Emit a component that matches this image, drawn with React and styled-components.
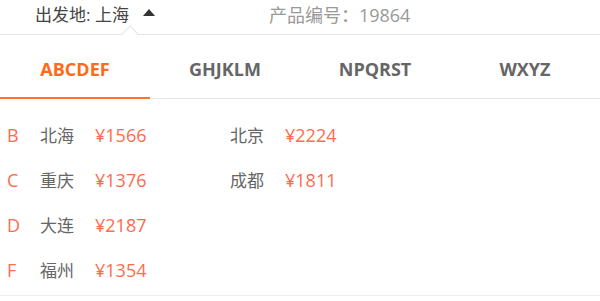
import React, { useState } from 'react';
import styled, { createGlobalStyle } from 'styled-components';

const GlobalStyle = createGlobalStyle`
  html, body {
    margin: 0;
    padding: 0;
    background: #fff;
  }
  body {
    font-family: "Open Sans", "Noto Sans CJK SC", sans-serif;
  }
`;

const Panel = styled.div`
  width: 600px;
  background: #fff;
`;

// Top bar with origin selector and product number
const TopBar = styled.div`
  position: relative;
  height: 35px;
  display: flex;
  align-items: center;
  padding-bottom: 7px;
  box-sizing: border-box;
  border-bottom: 1px solid #e4e4e4;
  font-size: 17px;
`;

const Origin = styled.div`
  display: flex;
  align-items: center;
  margin-left: 35px;
  color: #444;
`;

const Caret = styled.span`
  display: inline-block;
  width: 0;
  height: 0;
  margin-left: 14px;
  margin-top: -2px;
  border-left: 6px solid transparent;
  border-right: 6px solid transparent;
  border-bottom: 7px solid #333;
`;

const ProductNo = styled.div`
  margin-left: 114px;
  font-size: 18px;
  color: #999;
`;

const Notch = styled.span`
  position: absolute;
  left: 124px;
  bottom: -6px;
  width: 11px;
  height: 11px;
  background: #fff;
  border-left: 1px solid #e4e4e4;
  border-top: 1px solid #e4e4e4;
  transform: rotate(45deg);
`;

// Alphabet tabs
const Tabs = styled.div`
  display: grid;
  grid-template-columns: repeat(4, 150px);
  border-bottom: 1px solid #e6e6e6;
`;

const Tab = styled.button`
  height: 64px;
  padding: 5px 0 0;
  margin: 0 0 -1px;
  border: 0;
  border-bottom: 2px solid ${p => (p.$active ? '#ff7428' : 'transparent')};
  background: none;
  font-family: inherit;
  font-size: 18px;
  font-weight: 700;
  color: ${p => (p.$active ? '#ff6a1a' : '#666')};
  cursor: pointer;
`;

// City list
const List = styled.div`
  padding: 13px 0 3px;
  border-bottom: 1px solid #eeeeee;
`;

const Row = styled.div`
  height: 45px;
  display: flex;
  align-items: center;
  font-size: 18px;
`;

const Letter = styled.span`
  width: 33px;
  padding-left: 7px;
  color: #ff6b4e;
`;

const Item = styled.span`
  width: 190px;
  display: flex;
  align-items: center;
`;

const City = styled.span`
  width: 55px;
  font-size: 17px;
  color: #666;
`;

const Price = styled.span`
  color: #ff6b4e;
`;

const tabs = ['ABCDEF', 'GHJKLM', 'NPQRST', 'WXYZ'];

const groups = [
  { letter: 'B', cities: [['北海', 1566], ['北京', 2224]] },
  { letter: 'C', cities: [['重庆', 1376], ['成都', 1811]] },
  { letter: 'D', cities: [['大连', 2187]] },
  { letter: 'F', cities: [['福州', 1354]] },
];

export default function App() {
  const [active, setActive] = useState(0);
  return (
    <Panel>
      <GlobalStyle />
      <TopBar>
        <Origin>
          出发地: 上海
          <Caret />
        </Origin>
        <ProductNo>产品编号：19864</ProductNo>
        <Notch />
      </TopBar>
      <Tabs>
        {tabs.map((t, i) => (
          <Tab key={t} $active={i === active} onClick={() => setActive(i)}>
            {t}
          </Tab>
        ))}
      </Tabs>
      <List>
        {groups.map(g => (
          <Row key={g.letter}>
            <Letter>{g.letter}</Letter>
            {g.cities.map(([name, price]) => (
              <Item key={name}>
                <City>{name}</City>
                <Price>¥{price}</Price>
              </Item>
            ))}
          </Row>
        ))}
      </List>
    </Panel>
  );
}
